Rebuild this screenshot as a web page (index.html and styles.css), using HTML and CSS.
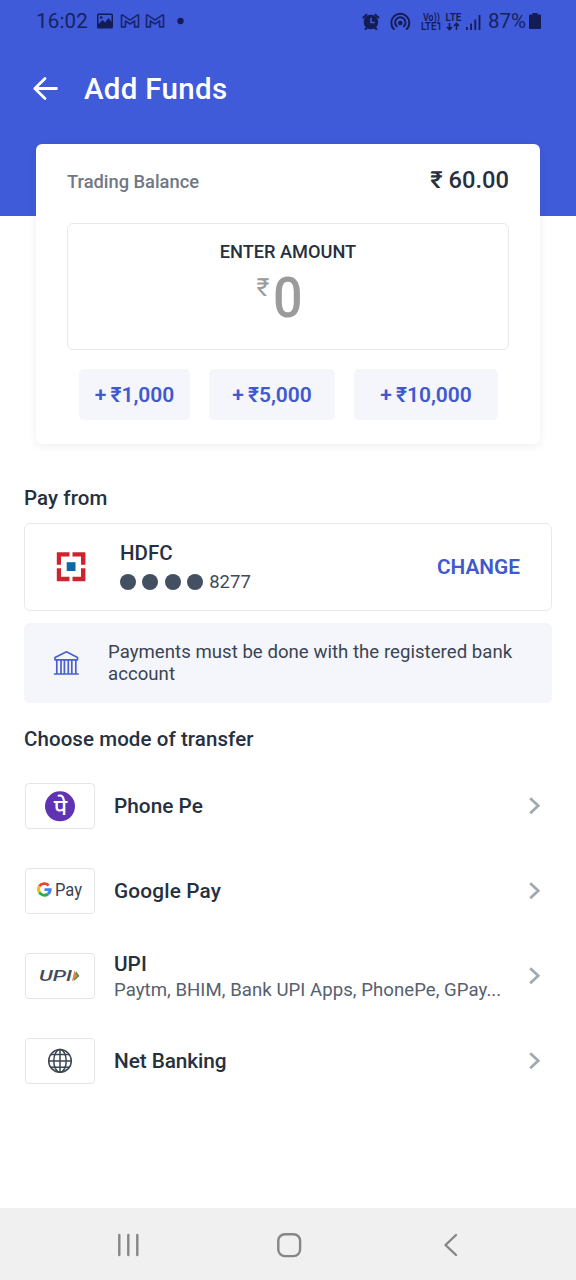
FILE: index.html
```html
<!DOCTYPE html>
<html lang="en">
<head>
<meta charset="utf-8">
<title>Add Funds</title>
<link rel="stylesheet" href="styles.css">
</head>
<body>
<div class="screen">
  <header class="top">
    <div class="status">
      <span class="clock">16:02</span>
      <svg class="st-left" width="92" height="20" viewBox="0 0 92 20">
        <path fill="#141c55" fill-rule="evenodd" d="M2.500 2.500h13a1.500 1.500 0 0 1 1.500 1.500v12a1.500 1.500 0 0 1-1.500 1.500h-13A1.500 1.500 0 0 1 1 16V4a1.500 1.500 0 0 1 1.500-1.500zM2.500 4v9l4-4 2.500 2.500 3.500-4.500 3 4V4z"/>
        <circle cx="5.200" cy="6.500" r="1.300" fill="#141c55"/>
        <g fill="none" stroke="#1a2670" stroke-width="1.700" stroke-linejoin="round">
          <path d="M25.500 4.700q0-1 1.200-.6L34 9.100l7.300-5q1.200-.4 1.200.6V15.900H38.600V9.900L34 13 29.400 9.900V15.900H25.500z"/>
          <path d="M50.500 4.700q0-1 1.200-.6L59 9.100l7.300-5q1.200-.4 1.200.6V15.900H63.600V9.900L59 13 54.400 9.900V15.900H50.500z"/>
        </g>
        <circle cx="84.500" cy="10" r="3.200" fill="#141c55"/>
      </svg>
      <svg class="st-right" width="122" height="24" viewBox="361 8 122 24">
        <g stroke="#141c55" stroke-width="2" stroke-linecap="round" fill="none">
          <path d="M363.300 16.500l3.200-2.800M378.500 16.500l-3.200-2.800M365.500 28l1.800-1.800M376.300 28l-1.800-1.800"/>
        </g>
        <circle cx="370.900" cy="21" r="7.300" fill="#141c55"/>
        <path d="M371 16.800v4.600h3.800" fill="none" stroke="#3f5bd9" stroke-width="1.500"/>
        <g fill="none" stroke="#141c55" stroke-width="2" stroke-linecap="round">
          <path d="M393.800 28a9 9 0 1 1 13 0"/>
          <path d="M396.700 25.300a5.200 5.200 0 1 1 7.200 0"/>
        </g>
        <circle cx="400.300" cy="22" r="2.300" fill="#141c55"/>
        <g fill="#141c55" font-family="Roboto, sans-serif" font-weight="600" font-size="10">
          <text x="423" y="19.500" textLength="17" lengthAdjust="spacingAndGlyphs">Vo))</text>
          <text x="421" y="29" textLength="21" lengthAdjust="spacingAndGlyphs">LTE1</text>
          <text x="445.500" y="20" textLength="16" lengthAdjust="spacingAndGlyphs">LTE</text>
        </g>
        <g fill="none" stroke="#141c55" stroke-width="1.600">
          <path d="M449.500 22v6.500M447 26l2.500 2.500L452 26M456.500 29v-6.500M454 25l2.500-2.500L459 25"/>
        </g>
        <path fill="#141c55" d="M466 26h1.800v3h-1.800zM470.200 22.500h1.800v6.500h-1.800zM474.400 18.500h1.800V29h-1.800zM478.600 14h1.800v15h-1.800z"/>
      </svg>
      <span class="battery-text">87%</span>
      <svg width="12" height="18" viewBox="0 0 12 18"><path fill="#141c55" d="M3.500 1h5v1.500H11a1 1 0 0 1 1 1v12.500a1 1 0 0 1-1 1H1a1 1 0 0 1-1-1V3.500a1 1 0 0 1 1-1h2.500z"/></svg>
    </div>
    <div class="appbar">
      <svg width="26" height="26" viewBox="0 0 26 26" fill="none" stroke="#fff" stroke-width="2.800" stroke-linecap="round" stroke-linejoin="round"><path d="M24.500 12.500H3M13 2.500L2.800 12.500l10.200 10"/></svg>
      <h1 class="title">Add Funds</h1>
    </div>
  </header>

  <section class="card">
    <div class="balance">
      <span class="balance-label">Trading Balance</span>
      <span class="balance-value">₹ 60.00</span>
    </div>
    <div class="amount">
      <span class="amount-label">ENTER AMOUNT</span>
      <div class="amount-value"><span class="rupee">₹</span><span class="zero">0</span></div>
    </div>
    <div class="chips">
      <button class="chip chip-1">+ ₹1,000</button>
      <button class="chip chip-2">+ ₹5,000</button>
      <button class="chip chip-3">+ ₹10,000</button>
    </div>
  </section>

  <main class="content">
    <h2 class="heading pay-from">Pay from</h2>
    <div class="bank">
      <svg class="bank-logo" width="30" height="30" viewBox="0 0 30 30">
        <path fill="#cf2430" d="M.8.200h12.700V4.500H5v8.200H.8zM16.500.200h12.900v12.500H25V4.500h-8.500zM.8 16.200H5v8.600h8.500v4.400H.8zM25 16.200h4.400v13H16.500v-4.400H25z"/>
        <path fill="#0d68a8" d="M10.700 10.200h8.800v8.800h-8.800z"/>
      </svg>
      <div class="bank-info">
        <span class="bank-name">HDFC</span>
        <span class="account"><i class="dot"></i><i class="dot"></i><i class="dot"></i><i class="dot"></i><span class="digits">8277</span></span>
      </div>
      <a class="change">CHANGE</a>
    </div>
    <div class="notice">
      <svg class="notice-icon" width="26" height="26" viewBox="0 0 26 26" fill="none" stroke="#4a5fd3" stroke-width="1.700" stroke-linejoin="round" stroke-linecap="round">
        <path d="M2 7.500L13.500 1.800 24.500 7.500v2.300H2zM1.500 24h23.500M3.800 9.800V24M8 9.800V24M11.400 9.800V24M15.300 9.800V24M18.800 9.800V24M22.800 9.800V24"/>
      </svg>
      <p class="notice-text">Payments must be done with the registered bank account</p>
    </div>

    <h2 class="heading choose">Choose mode of transfer</h2>
    <ul class="modes">
      <li class="mode">
        <span class="logo">
          <svg width="68" height="44" viewBox="26 784 68 44">
            <circle cx="60" cy="806.300" r="15" fill="#5f33b1"/>
            <text class="pe" x="60.500" y="815" text-anchor="middle">पे</text>
          </svg>
        </span>
        <span class="mode-name n1">Phone Pe</span>
        <svg class="chev" width="12" height="18" viewBox="0 0 12 18"><path d="M1.200 1.200L9.200 8.700l-8 7.500"/></svg>
      </li>
      <li class="mode">
        <span class="logo">
          <svg width="68" height="44" viewBox="26 869 68 44">
            <g fill="none" stroke-width="2.900">
              <path stroke="#ea4335" d="M39.300 886.300a5.900 5.900 0 0 1 9.300-.8"/>
              <path stroke="#fbbc04" d="M39.300 892.300a6 6 0 0 1 0-6"/>
              <path stroke="#34a853" d="M48 894a5.900 5.900 0 0 1-8.700-1.700"/>
              <path stroke="#4285f4" d="M44.500 889.600h5.700a5.900 5.900 0 0 1-2.200 4.400"/>
            </g>
            <text class="gpay" x="55" y="896" textLength="27" lengthAdjust="spacingAndGlyphs">Pay</text>
          </svg>
        </span>
        <span class="mode-name n2">Google Pay</span>
        <svg class="chev" width="12" height="18" viewBox="0 0 12 18"><path d="M1.200 1.200L9.200 8.700l-8 7.500"/></svg>
      </li>
      <li class="mode">
        <span class="logo">
          <svg width="68" height="44" viewBox="26 954 68 44">
            <text class="upi" x="39" y="981" textLength="33" lengthAdjust="spacingAndGlyphs">UPI</text>
            <path fill="#3f8a4b" d="M76 971.200l3.400 4.800-5.800 5.300z"/>
            <path fill="#e8833a" d="M74.500 970.500l2.900 5.600-5.600 5.400z"/>
          </svg>
        </span>
        <div class="mode-body">
          <span class="mode-name n3">UPI</span>
          <span class="mode-sub">Paytm, BHIM, Bank UPI Apps, PhonePe, GPay...</span>
        </div>
        <svg class="chev" width="12" height="18" viewBox="0 0 12 18"><path d="M1.200 1.200L9.200 8.700l-8 7.500"/></svg>
      </li>
      <li class="mode">
        <span class="logo">
          <svg width="68" height="44" viewBox="26 1039 68 44" fill="none" stroke="#3c4654" stroke-width="1.500">
            <circle cx="60" cy="1060.900" r="11.300"/>
            <ellipse cx="60" cy="1060.900" rx="6.200" ry="11.300"/>
            <path d="M60 1049.600v22.600M48.700 1060.900h22.600M50.800 1054.600h18.400M50.800 1067.200h18.400"/>
          </svg>
        </span>
        <span class="mode-name n4">Net Banking</span>
        <svg class="chev" width="12" height="18" viewBox="0 0 12 18"><path d="M1.200 1.200L9.200 8.700l-8 7.500"/></svg>
      </li>
    </ul>
  </main>

  <nav class="navbar">
    <svg width="576" height="72" viewBox="0 1208 576 72" fill="none" stroke="#868686" stroke-width="2.400" stroke-linecap="round" stroke-linejoin="round">
      <path d="M119.300 1235v20M128.300 1235v20M137.300 1235v20"/>
      <rect x="278.300" y="1234.300" width="21.800" height="21.800" rx="6.500"/>
      <path d="M456 1235l-10.500 10 10.500 10"/>
    </svg>
  </nav>
</div>
</body>
</html>
```
FILE: styles.css
```css
* { box-sizing: border-box; }

body {
  margin: 0;
  background: #fff;
  font-family: Roboto, "Liberation Sans", sans-serif;
  color: #27303f;
}

.screen {
  width: 576px;
  height: 1280px;
  display: flex;
  flex-direction: column;
  overflow: hidden;
}

.top { height: 216px; flex: none; background: #3f5bd9; }

.status {
  display: flex;
  align-items: center;
  height: 42px;
  padding: 0 35px 0 36px;
  color: #18225f;
}
.clock { font-size: 20.500px; letter-spacing: 0.200px; width: 60px; }
.st-left { margin-right: auto; }
.battery-text { font-size: 20.500px; width: 41px; margin-left: 5px; white-space: nowrap; }

.appbar {
  display: flex;
  align-items: center;
  gap: 26px;
  height: 93px;
  padding-left: 32px;
}
.title { margin: 0; font-size: 29.500px; letter-spacing: 0.300px; font-weight: 500; line-height: 36px; color: #fff; }

.card {
  flex: none;
  width: 504px;
  height: 300px;
  margin: -72px auto 0;
  padding: 0 31px;
  border-radius: 6px;
  background: #fff;
  box-shadow: 0 2px 10px rgba(0, 0, 0, 0.07);
}
.balance {
  display: flex;
  justify-content: space-between;
  height: 79px;
  padding-top: 22px;
}
.balance-label { padding-top: 3px; font-size: 18.300px; line-height: 26px; font-weight: 500; color: #6f7884; }
.balance-value { font-size: 23.700px; line-height: 29px; font-weight: 500; }

.amount {
  display: flex;
  flex-direction: column;
  align-items: center;
  height: 127px;
  padding-top: 16px;
  border: 1.500px solid #e9e9eb;
  border-radius: 6px;
}
.amount-label { font-size: 18.200px; line-height: 24px; font-weight: 500; }
.amount-value { display: flex; align-items: flex-start; margin-right: 17px; color: #9b9b9b; }
.rupee { font-size: 25px; line-height: 48px; margin-right: 4px; }
.zero { width: 29px; font-size: 56px; line-height: 68px; font-weight: 500; transform: scaleX(0.930); transform-origin: left; }

.chips { display: flex; gap: 19px; margin: 19px 0 0 12px; }
.chip {
  height: 51px;
  padding: 0;
  border: 0;
  border-radius: 5px;
  background: #f4f6fc;
  color: #4059cf;
  font: 600 21px Roboto, sans-serif;
  word-spacing: -1px;
}
.chip-1 { width: 111px; }
.chip-2 { width: 126px; }
.chip-3 { width: 144px; }

.content { flex: 1; padding: 40px 24px 0; }
.heading { margin: 0; font-size: 20.500px; letter-spacing: 0.080px; line-height: 28px; font-weight: 500; }

.bank {
  display: flex;
  align-items: center;
  height: 88px;
  margin-top: 11px;
  padding: 0 31px 0 31px;
  border: 1.500px solid #e9e9eb;
  border-radius: 6px;
}
.bank-info { display: flex; flex-direction: column; margin-left: 34px; }
.bank-name { font-size: 20.500px; line-height: 29px; font-weight: 500; }
.account { display: flex; align-items: center; gap: 6.300px; height: 28px; color: #3f4a5a; }
.dot { width: 16px; height: 16px; border-radius: 50%; background: #425062; }
.digits { font-size: 18.500px; font-weight: 450; }
.change { margin-left: auto; font-size: 20.800px; font-weight: 650; color: #4059cf; }

.notice {
  display: flex;
  align-items: center;
  height: 80px;
  margin-top: 12px;
  padding-left: 29px;
  border-radius: 5px;
  background: #f4f6fc;
}
.notice-text {
  width: 420px;
  margin: 0 0 0 29px;
  font-size: 18.600px;
  letter-spacing: 0.030px;
  line-height: 22px;
  color: #3a4453;
}

.choose { margin-top: 22px; }
.modes {
  display: flex;
  flex-direction: column;
  gap: 39px;
  margin: 30px 0 0;
  padding: 0 11px 0 1px;
  list-style: none;
}
.mode { display: flex; align-items: center; height: 46px; }
.logo {
  width: 70px;
  height: 46px;
  margin-right: 19px;
  border: 1px solid #e4e5e9;
  border-radius: 4px;
}
.logo svg { display: block; }
.mode-body { display: flex; flex-direction: column; padding-top: 2px; }
.mode-name { font-size: 20.800px; line-height: 26px; font-weight: 500; }
.n2 { letter-spacing: 0.160px; }
.n4 { letter-spacing: -0.080px; }
.mode-sub { font-size: 18.600px; letter-spacing: 0.050px; line-height: 27px; color: #56606e; white-space: nowrap; }
.chev { margin-left: auto; fill: none; stroke: #a3a9b2; stroke-width: 2.800; }

.pe { font: 500 23px "Noto Sans Devanagari", "Noto Sans", sans-serif; fill: #fff; }
.gpay { font: 400 17.500px Roboto, sans-serif; fill: #3c4450; }
.upi { font: italic 500 14px Roboto, sans-serif; fill: #414b5b; }

.navbar { height: 72px; flex: none; background: #f0f0f0; }
.navbar svg { display: block; }
```
